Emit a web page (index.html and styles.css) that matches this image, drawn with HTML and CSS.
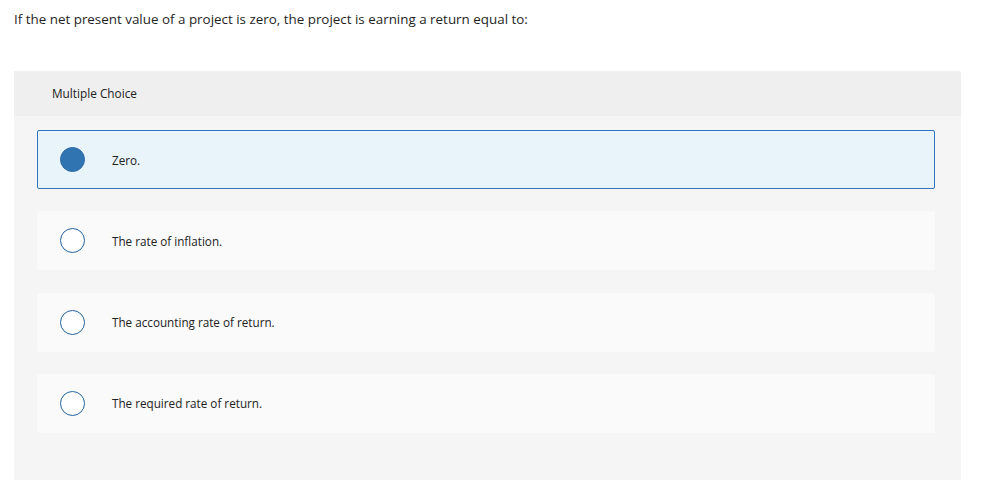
FILE: index.html
```html
<!DOCTYPE html>
<html>
<head>
<meta charset="utf-8">
<link rel="stylesheet" href="styles.css">
</head>
<body>
<div class="page">
  <p class="question">If the net present value of a project is zero, the project is earning a return equal to:</p>
  <section class="panel">
    <header class="panel-head">Multiple Choice</header>
    <div class="options">
      <div class="option selected">
        <span class="radio"></span>
        <span class="label">Zero.</span>
      </div>
      <div class="option">
        <span class="radio"></span>
        <span class="label">The rate of inflation.</span>
      </div>
      <div class="option">
        <span class="radio"></span>
        <span class="label">The accounting rate of return.</span>
      </div>
      <div class="option">
        <span class="radio"></span>
        <span class="label">The required rate of return.</span>
      </div>
    </div>
  </section>
</div>
</body>
</html>
```
FILE: styles.css
```css
html, body {
  margin: 0;
  padding: 0;
  background: #ffffff;
}
body {
  font-family: "Open Sans", "Liberation Sans", sans-serif;
  color: #222222;
}
.page {
  padding: 0 37px 0 14px;
}
.question {
  margin: 0;
  padding-top: 10px;
  height: 71px;
  box-sizing: border-box;
  font-size: 13.4px;
  line-height: 18px;
  color: #1f1f1f;
}
.panel {
  background: #f5f5f5;
  border-radius: 0 3px 0 0;
  height: 409px;
}
.panel-head {
  background: #efefef;
  height: 44.5px;
  box-sizing: border-box;
  padding: 14px 0 0 38px;
  font-size: 11.8px;
  line-height: 16px;
  color: #222;
  border-radius: 0 3px 0 0;
}
.options {
  display: flex;
  flex-direction: column;
  gap: 22.3px;
  padding: 14.5px 26px 0 23px;
}
.option {
  display: flex;
  align-items: center;
  height: 59px;
  box-sizing: border-box;
  background: #fafafa;
  border: 1px solid transparent;
  border-radius: 3px;
  padding-left: 22px;
}
.option.selected {
  background: #e8f3fa;
  border-color: #2f74bd;
  border-radius: 2px;
}
.radio {
  width: 25px;
  height: 25px;
  box-sizing: border-box;
  border: 1.5px solid #22639e;
  border-radius: 50%;
  background: #ffffff;
  flex: none;
}
.selected .radio {
  background: #3174b2;
  border-color: #2a6aa6;
}
.label {
  margin-left: 27px;
  font-size: 11.7px;
  color: #222;
}
```
